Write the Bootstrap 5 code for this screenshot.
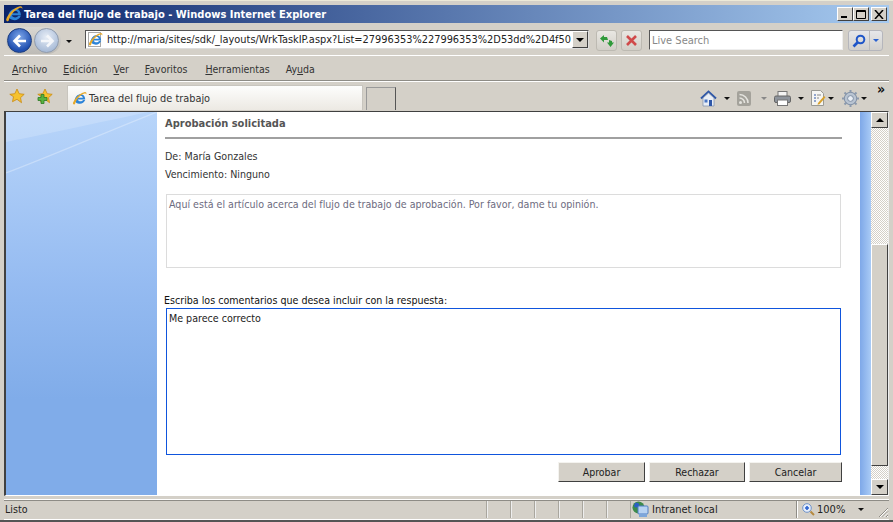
<!DOCTYPE html>
<html lang="es">
<head>
  <meta charset="UTF-8">
  <title>Tarea del flujo de trabajo - Windows Internet Explorer</title>
  <link href="https://cdn.jsdelivr.net/npm/bootstrap@5.3.0/dist/css/bootstrap.min.css" rel="stylesheet">
  <style>
    html, body { height: 100%; margin: 0; overflow: hidden; background: #d4d0c8; }
    body { font-family: "DejaVu Sans Condensed", "DejaVu Sans", sans-serif; font-size: 10.6px; line-height: 13px; color: #222; }
    .ie-window { width: 893px; height: 522px; padding: 4px 4px 2px 4px; border-top: 1px solid #ece9d8; box-shadow: inset 0 -2px 0 #555; }
    .ie-title { height: 18px; flex: none; background: linear-gradient(90deg, #0a246a, #a6caf0); color: #fff; font-weight: 700; font-size: 11.05px; padding-left: 1px; }
    .ie-title svg { margin-right: 1px; }
    .win-btn { width: 16px; height: 14px; background: #d4d0c8; border: 1px solid; border-color: #fff #404040 #404040 #fff; display: flex; align-items: center; justify-content: center; }
    .win-btns { margin-right: 2px; }
    .win-btns .win-btn:last-child { margin-left: 2px; }
    .ie-address { height: 33px; flex: none; padding: 4px 1px 0 2px; border-bottom: 1px solid #fff; }
    .nav-capsule { width: 55px; height: 27px; flex: none; border-radius: 14px; background: linear-gradient(#d9d7d2, #bdbbb6); padding: 1px; gap: 2px; }
    .nav-round { width: 25px; height: 25px; border-radius: 50%; flex: none; }
    .nav-back { background: radial-gradient(circle at 50% 35%, #7fa8ea, #1f4fb0 70%); border: 1px solid #1c3c7d; }
    .nav-forward { background: radial-gradient(circle at 50% 35%, #e7edf6, #a9bcd8 75%); border: 1px solid #8f9bad; }
    .caret-black { width: 0; height: 0; border-left: 3px solid transparent; border-right: 3px solid transparent; border-top: 3px solid #111; }
    .caret-gray { border-top-color: #888; }
    .caret-blue { border-top-color: #2a62d0; }
    .caret-nav { margin: 1px 0 0 5px; }
    .addr-box { width: 504px; height: 19px; margin-left: 13px; margin-top: 3px; background: #fff; border: 1px solid; border-color: #555 #ddd #ddd #555; flex: none; padding-left: 2px; }
    .addr-text { font-size: 10.9px; margin-left: 4px; white-space: nowrap; overflow: hidden; width: 468px; color: #222; }
    .combo-btn { width: 16px; height: 17px; background: #d4d0c8; border: 1px solid; border-color: #fff #404040 #404040 #fff; flex: none; display: flex; align-items: center; justify-content: center; }
    .combo-btn .caret-black { border-width: 4px 4px 0; border-top-color: #000; border-left-color: transparent; border-right-color: transparent; }
    .tool-btn { width: 21px; height: 21px; margin-top: 3px; margin-left: 4px; border: 1px solid #bdbab2; border-radius: 3px; background: linear-gradient(#e9e7e2, #d2cfc8); flex: none; display: flex; align-items: center; justify-content: center; }
    .tool-first { margin-left: 7px; }
    .search-box { width: 194px; height: 20px; margin: 3px 0 0 7px; border: 1px solid; border-color: #555 #eee #eee #555; background: #fff; color: #888; font-size: 11px; padding: 3px 0 0 2px; flex: none; }
    .search-btn { width: 35px; height: 21px; margin: 3px 0 0 5px; border: 1px solid #b5b6bc; border-radius: 3px; background: linear-gradient(#e6e7ea, #d2d0cc); flex: none; }
    .search-btn > div:first-child { width: 21px; border-right: 1px solid #bbb; }
    .ie-menu { height: 25px; flex: none; padding: 2px 0 0 8px; border-bottom: 1px solid #8e8c86; font-size: 10.5px; color: #333; }
    .ie-menu span { display: block; }
    .ie-menu span.menu-wide { margin-left: 18px !important; }
    .ie-tabs { height: 30px; flex: none; box-shadow: inset 0 1px 0 #fff; }
    .fav-icons { width: 63px; padding-left: 5px; gap: 12px; flex: none; }
    .ie-tab { width: 296px; height: 25px; margin-top: 4px; background: linear-gradient(#fdfdfc, #ece9e3); border: 1px solid #c8c5be; border-bottom: 0; padding-left: 4px; flex: none; color: #333; font-size: 10.85px; }
    .ie-tab svg { margin-right: 2px; }
    .ie-tab-new { width: 30px; height: 23px; margin: 6px 0 0 3px; border: 1px solid #999; border-bottom: 0; border-right-color: #555; flex: none; }
    .cmd-icons { margin-left: auto; padding-right: 4px; padding-top: 4px; flex: none; }
    .cmd-item { display: flex; align-items: center; }
    .cmd-item + .cmd-item { margin-left: 7px; }
    .cmd-item + .cmd-item.cmd-tight { margin-left: 8px; }
    .caret-far { margin-left: 10px; }
    .caret-mid { margin-left: 7px; }
    .caret-near { margin-left: 2px; }
    .cmd-more { width: 8px; font-weight: 700; font-size: 14px; color: #111; margin: -17px 0 0 10px; }
    .ie-content { flex: 1 1 auto; min-height: 0; border: 1px solid; border-color: #404040 #eee #fff #404040; border-left-width: 2px; }
    .side-panel { width: 151px; flex: none; position: relative; overflow: hidden; background: linear-gradient(#b8d5fa, #95bbf1 45%, #80ace9 75%); }
    .side-panel svg { position: absolute; left: 0; top: 0; }
    .page-main { width: 703px; flex: none; background: #fff; padding: 5px 18px 0 8px; }
    .page-heading { font-weight: 700; color: #555; font-size: 11px; line-height: 14px; }
    .page-rule { height: 2px; background: #a0a0a0; margin: 6px 0 10px; }
    .page-line { height: 18px; line-height: 14px; color: #333; }
    .msg-box { width: 675px; height: 74px; margin: 9px 0 0 1px; border: 1px solid #dcdcdc; color: #6d6b80; padding: 3px 2px; }
    .comment-label { margin: 26px 0 1px -1px; line-height: 13px; color: #111; }
    textarea.comment-area { display: block; width: 675px; height: 147px; margin-left: 1px; padding: 3px 2px; border: 1px solid #0f55dd; border-radius: 0; font-size: 10.6px; line-height: 13px; font-family: inherit; color: #222; resize: none; box-shadow: none; }
    .action-row { gap: 4px; margin-top: 7px; }
    .btn.act-btn { height: 20px; padding: 0; border-radius: 0; background: #d4d0c8; color: #222; font-size: 10.5px; line-height: 17px; border: 1px solid; border-color: #f4f3ef #404040 #404040 #f4f3ef; }
    .act-approve { width: 87px; }
    .act-reject { width: 96px; }
    .act-cancel { width: 93px; }
    .strip { width: 11px; flex: none; background: linear-gradient(90deg, #7ea8e8, #a9cbf6); }
    .scroll-bar { width: 17px; flex: none; background-color: #fff; background-image: conic-gradient(#d4d0c8 25%, #fff 0 50%, #d4d0c8 0 75%, #fff 0); background-size: 2px 2px; }
    .scroll-btn { height: 16px; background: #d4d0c8; border: 1px solid; border-color: #fff #404040 #404040 #fff; flex: none; display: flex; align-items: center; justify-content: center; }
    .scroll-thumb { height: 222px; margin-top: 116px; background: #d4d0c8; border: 1px solid; border-color: #fff #404040 #404040 #fff; flex: none; }
    .arrow-up { width: 0; height: 0; border: 4px solid transparent; border-top: 0; border-bottom: 4px solid #000; }
    .arrow-down { width: 0; height: 0; border: 4px solid transparent; border-bottom: 0; border-top: 4px solid #000; }
    .ie-status { height: 20px; flex: none; margin-top: 4px; padding-bottom: 1px; border-top: 1px solid #8e8c86; border-bottom: 1px solid #fff; color: #222; box-shadow: 0 -1px 0 #fff; }
    .status-text { width: 482px; padding-left: 1px; flex: none; }
    .status-cell { width: 24px; height: 100%; border-left: 1px solid #a9a69e; box-shadow: inset 1px 0 0 #eee; flex: none; }
    .zone-cell { width: 166px; height: 100%; flex: none; padding-left: 1px; border-left: 1px solid #a9a69e; gap: 3px; font-size: 11px; }
    .zoom-cell { width: 72px; height: 100%; flex: none; padding-left: 5px; border-left: 1px solid #8e8c86; box-shadow: inset 1px 0 0 #fff; gap: 2px; font-size: 11px; }
    .zoom-caret { margin-right: 4px; }
    .grip { flex: 1 1 auto; align-self: flex-end; display: flex; justify-content: flex-end; }
  </style>
</head>
<body>
  <svg width="0" height="0" class="d-block">
    <defs>
      <symbol id="ie-logo" viewBox="0 0 16 16">
        <path d="M3 9.200C3.600 5.600 6.300 3.400 9.200 3.400c3 0 4.900 2.400 4.900 5.600H6.200c.2 2 4 3 5.700.6h2.200c-1 2.600-3.200 4-5.600 4-3 0-5.700-1.900-5.900-4.400zM6.300 7.300h5.300C11.400 5.700 10.300 5 9 5 7.700 5 6.600 5.900 6.300 7.300z" fill="#2d84d8"/>
        <path d="M1 12.800C2.600 8 8.100 2.400 13.300 1.200c1.400-.3 2.500.6 2 2.500-.2-1-1.300-1.500-2.800-.9C8 4.800 4.200 9.500 3.300 13.700c-.3 1.100-2.300.9-2.300-.9z" fill="#e7a827"/>
      </symbol>
      <symbol id="star" viewBox="0 0 16 16">
        <path d="M8 1l2.200 4.700 5 .6-3.700 3.400 1 5L8 11.300 3.500 13.700l1-5L.8 6.300l5-.6z" fill="#f6c22e" stroke="#c98a12" stroke-width=".8"/>
      </symbol>
    </defs>
  </svg>

  <div class="ie-window d-flex flex-column">
    <div class="ie-title d-flex align-items-center">
      <svg width="18" height="18"><use href="#ie-logo"/></svg>
      <span>Tarea del flujo de trabajo - Windows Internet Explorer</span>
      <div class="win-btns d-flex ms-auto">
        <div class="win-btn"><svg width="10" height="9"><rect x="1" y="6" width="6" height="2" fill="#000"/></svg></div>
        <div class="win-btn"><svg width="10" height="9"><path d="M.5 .5h9v8h-9z M.5 1.500h9" fill="none" stroke="#000"/></svg></div>
        <div class="win-btn"><svg width="10" height="9"><path d="M1 0l8 9M9 0l-8 9" stroke="#000" stroke-width="1.500"/></svg></div>
      </div>
    </div>

    <div class="ie-address d-flex">
      <div class="nav-capsule d-flex">
        <div class="nav-round nav-back d-flex align-items-center justify-content-center">
          <svg width="16" height="14"><path d="M8 1.500L2.500 7 8 12.500M3 7h11" fill="none" stroke="#fff" stroke-width="2.600"/></svg>
        </div>
        <div class="nav-round nav-forward d-flex align-items-center justify-content-center">
          <svg width="16" height="14"><path d="M8 1.500L13.500 7 8 12.500M13 7H2" fill="none" stroke="#f4f6fa" stroke-width="2.600"/></svg>
        </div>
      </div>
      <div class="caret-black caret-nav align-self-center"></div>
      <div class="addr-box d-flex align-items-center">
        <svg width="15" height="15"><rect x=".5" y=".5" width="12" height="14" fill="#fff" stroke="#aaa"/><use href="#ie-logo"/></svg>
        <div class="addr-text">http://maria/sites/sdk/_layouts/WrkTaskIP.aspx?List=27996353%227996353%2D53dd%2D4f50</div>
        <div class="combo-btn"><div class="caret-black"></div></div>
      </div>
      <div class="tool-btn tool-first">
        <svg width="16" height="14"><path d="M1 4.500L5 1v2h3l1 3H5v2.500zM15 8.500L11.500 13 8 8.500h2V6l3 1v1.500z" fill="#2f9a3a"/></svg>
      </div>
      <div class="tool-btn">
        <svg width="13" height="13"><path d="M2 2l9 9M11 2l-9 9" stroke="#d04a4a" stroke-width="2.600"/></svg>
      </div>
      <div class="search-box">Live Search</div>
      <div class="search-btn d-flex">
        <div class="d-flex align-items-center justify-content-center">
          <svg width="14" height="14"><circle cx="8.500" cy="5.500" r="3.800" fill="none" stroke="#1f56c8" stroke-width="2"/><path d="M5.500 8.500L1.500 12.500" stroke="#1f56c8" stroke-width="2.600"/></svg>
        </div>
        <div class="flex-grow-1 d-flex align-items-center justify-content-center"><div class="caret-black caret-blue"></div></div>
      </div>
    </div>

    <div class="ie-menu d-flex align-items-center">
      <span><u>A</u>rchivo</span>
      <span class="ms-3"><u>E</u>dición</span>
      <span class="ms-3"><u>V</u>er</span>
      <span class="ms-3"><u>F</u>avoritos</span>
      <span class="ms-3 menu-wide"><u>H</u>erramientas</span>
      <span class="ms-3">Ay<u>u</u>da</span>
    </div>

    <div class="ie-tabs d-flex">
      <div class="fav-icons d-flex align-items-center">
        <svg width="16" height="16"><use href="#star"/></svg>
        <svg width="16" height="16"><use href="#star"/><path d="M1 9.500h3v-3h3v3h3v3H7v3H4v-3H1z" fill="#58b33f" stroke="#2b7a25" stroke-width=".8"/></svg>
      </div>
      <div class="ie-tab d-flex align-items-center">
        <svg width="15" height="15"><use href="#ie-logo"/></svg>
        <span>Tarea del flujo de trabajo</span>
      </div>
      <div class="ie-tab-new"></div>
      <div class="cmd-icons d-flex align-items-center">
        <div class="cmd-item">
          <svg width="17" height="17"><path d="M1 8.500L8.500 1.500 16 8.500" fill="none" stroke="#2f57a8" stroke-width="2"/><path d="M3 8v8h11V8L8.500 3z" fill="#e9eef6" stroke="#7d8eab" stroke-width=".7"/><rect x="9" y="10" width="3" height="6" fill="#2f57a8"/><rect x="4.500" y="9.500" width="3" height="3" fill="#4a76c4"/></svg>
          <div class="caret-black caret-mid"></div>
        </div>
        <div class="cmd-item">
          <svg width="14" height="15"><rect width="14" height="15" rx="2" fill="#a4a29b"/><circle cx="3.500" cy="11.500" r="1.500" fill="#e5e4df"/><path d="M2.500 7a5 5 0 0 1 5 5M2.500 3.500a8.500 8.500 0 0 1 8.500 8.500" fill="none" stroke="#e5e4df" stroke-width="1.600"/></svg>
          <div class="caret-black caret-gray caret-far"></div>
        </div>
        <div class="cmd-item">
          <svg width="17" height="15"><rect x="4" y="0.500" width="9" height="5" fill="#f4f4f4" stroke="#777"/><rect x=".5" y="5" width="16" height="6.500" rx="1.500" fill="#8e949c" stroke="#666"/><rect x="3.500" y="9" width="10" height="5.500" fill="#fff" stroke="#777"/></svg>
          <div class="caret-black caret-mid"></div>
        </div>
        <div class="cmd-item">
          <svg width="15" height="16"><path d="M.5 .5h9l3 3v12H.5z" fill="#f5f5f2" stroke="#9a9a94"/><path d="M3 5h2M3 8h2M3 11h2" stroke="#2f57a8" stroke-width="1.200"/><path d="M6 5h4M6 8h2" stroke="#888"/><path d="M7 13l6-7 1.500 1.200-6 7-2 .5z" fill="#d9a12c"/></svg>
          <div class="caret-black caret-near"></div>
        </div>
        <div class="cmd-item cmd-tight">
          <svg width="17" height="17"><circle cx="8.500" cy="8.500" r="6.200" fill="#b9c4d2" stroke="#7d8da3" stroke-width="1"/><circle cx="8.500" cy="8.500" r="2.900" fill="#e9eef5" stroke="#7d8da3"/><path d="M8.500 0v3M8.500 14v3M0 8.500h3M14 8.500h3M2.500 2.500l2 2M12.500 12.500l2 2M14.500 2.500l-2 2M4.500 12.500l-2 2" stroke="#8b99ad" stroke-width="2"/></svg>
          <div class="caret-black caret-near"></div>
        </div>
        <div class="cmd-more">&raquo;</div>
      </div>
    </div>

    <div class="ie-content d-flex">
      <div class="side-panel">
        <svg width="151" height="70" viewBox="0 0 151 70">
          <path d="M0 30C50 20 105 8 142 0H0z" fill="#fff" opacity=".18"/>
          <path d="M0 61C50 42 105 18 151 0" fill="none" stroke="#fff" stroke-width="1.200" opacity=".3"/>
        </svg>
      </div>
      <div class="page-main">
        <div class="page-heading">Aprobación solicitada</div>
        <div class="page-rule"></div>
        <div class="page-line">De: María Gonzales</div>
        <div class="page-line">Vencimiento: Ninguno</div>
        <div class="msg-box">Aquí está el artículo acerca del flujo de trabajo de aprobación. Por favor, dame tu opinión.</div>
        <div class="comment-label">Escriba los comentarios que desea incluir con la respuesta:</div>
        <textarea class="form-control comment-area">Me parece correcto</textarea>
        <div class="action-row d-flex justify-content-end">
          <button type="button" class="btn act-btn act-approve">Aprobar</button>
          <button type="button" class="btn act-btn act-reject">Rechazar</button>
          <button type="button" class="btn act-btn act-cancel">Cancelar</button>
        </div>
      </div>
      <div class="strip"></div>
      <div class="scroll-bar d-flex flex-column">
        <div class="scroll-btn"><div class="arrow-up"></div></div>
        <div class="scroll-thumb"></div>
        <div class="scroll-btn mt-auto"><div class="arrow-down"></div></div>
      </div>
    </div>

    <div class="ie-status d-flex align-items-center">
      <div class="status-text">Listo</div>
      <div class="status-cell"></div>
      <div class="status-cell"></div>
      <div class="status-cell"></div>
      <div class="status-cell"></div>
      <div class="status-cell"></div>
      <div class="status-cell"></div>
      <div class="zone-cell d-flex align-items-center">
        <svg width="17" height="17"><circle cx="6.500" cy="6.500" r="6" fill="#3d8a4a"/><path d="M3 2c3-1 5 1 4 3S3 7 2 5z" fill="#2a5fc4"/><rect x="6" y="5" width="10" height="8" rx="1" fill="#b7d2f2" stroke="#4e7fc4"/><rect x="7" y="13" width="8" height="3" fill="#7da6da"/></svg>
        <span>Intranet local</span>
      </div>
      <div class="zoom-cell d-flex align-items-center">
        <svg width="13" height="13"><circle cx="5" cy="5" r="4.300" fill="#e6eefb" stroke="#6f93c9"/><path d="M3 5h4M5 3v4" stroke="#2a62d0" stroke-width="1.600"/><path d="M8.500 8.500l3.500 3.500" stroke="#b5893f" stroke-width="2"/></svg>
        <span>100%</span>
        <div class="caret-black ms-auto zoom-caret"></div>
      </div>
      <div class="grip">
        <svg width="11" height="11"><path d="M10 1L1 10M10 4.500L4.500 10M10 8L8 10" stroke="#8f8c85"/><path d="M10 2L2 10M10 5.500L5.500 10M10 9L9 10" stroke="#fff"/></svg>
      </div>
    </div>
  </div>
</body>
</html>
